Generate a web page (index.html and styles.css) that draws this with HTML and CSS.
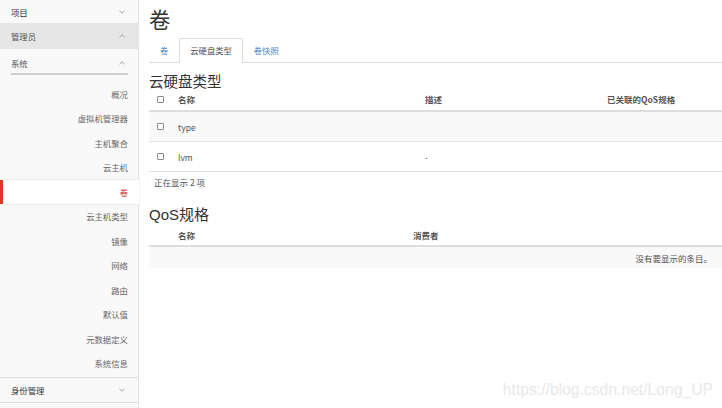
FILE: index.html
```html
<!DOCTYPE html>
<html lang="zh-CN">
<head>
<meta charset="utf-8">
<title>卷</title>
<link rel="stylesheet" href="styles.css">
</head>
<body>
<div class="page">
  <aside class="sidebar">
    <div class="nav-head">
      <span>项目</span>
      <svg class="chev" width="6" height="4" viewBox="0 0 6 4"><path d="M0.5 0.8L3 3.2L5.5 0.8" fill="none" stroke="#999" stroke-width="0.9"/></svg>
    </div>
    <div class="nav-head nav-head--open">
      <span>管理员</span>
      <svg class="chev" width="6" height="4" viewBox="0 0 6 4"><path d="M0.5 3.2L3 0.8L5.5 3.2" fill="none" stroke="#999" stroke-width="0.9"/></svg>
    </div>
    <div class="nav-sub">
      <span>系统</span>
      <svg class="chev" width="6" height="4" viewBox="0 0 6 4"><path d="M0.5 3.2L3 0.8L5.5 3.2" fill="none" stroke="#999" stroke-width="0.9"/></svg>
    </div>
    <ul class="nav-list">
      <li class="nav-item">概况</li>
      <li class="nav-item">虚拟机管理器</li>
      <li class="nav-item">主机聚合</li>
      <li class="nav-item">云主机</li>
      <li class="nav-item nav-item--active">卷</li>
      <li class="nav-item">云主机类型</li>
      <li class="nav-item">镜像</li>
      <li class="nav-item">网络</li>
      <li class="nav-item">路由</li>
      <li class="nav-item">默认值</li>
      <li class="nav-item">元数据定义</li>
      <li class="nav-item">系统信息</li>
    </ul>
    <div class="nav-head nav-head--bordered">
      <span>身份管理</span>
      <svg class="chev" width="6" height="4" viewBox="0 0 6 4"><path d="M0.5 0.8L3 3.2L5.5 0.8" fill="none" stroke="#999" stroke-width="0.9"/></svg>
    </div>
  </aside>

  <main class="main">
    <h1 class="title">卷</h1>
    <nav class="tabs">
      <a class="tab">卷</a>
      <a class="tab tab--active">云硬盘类型</a>
      <a class="tab">卷快照</a>
    </nav>

    <h2 class="section-title">云硬盘类型</h2>
    <div class="grid grid--types">
      <div class="row row--head">
        <div class="cell"><span class="checkbox"></span></div>
        <div class="cell">名称</div>
        <div class="cell">描述</div>
        <div class="cell">已关联的QoS规格</div>
      </div>
      <div class="row row--striped">
        <div class="cell"><span class="checkbox"></span></div>
        <div class="cell">type</div>
        <div class="cell"></div>
        <div class="cell"></div>
      </div>
      <div class="row">
        <div class="cell"><span class="checkbox"></span></div>
        <div class="cell">lvm</div>
        <div class="cell">-</div>
        <div class="cell"></div>
      </div>
    </div>
    <div class="count">正在显示 2 项</div>

    <h2 class="section-title section-title--qos">QoS规格</h2>
    <div class="grid grid--qos">
      <div class="row row--head">
        <div class="cell"></div>
        <div class="cell">名称</div>
        <div class="cell">消费者</div>
      </div>
      <div class="row row--empty">
        <div class="cell cell--empty">没有要显示的条目。</div>
      </div>
    </div>
  </main>
</div>
<div class="watermark">https://blog.csdn.net/Long_UP</div>
</body>
</html>
```

FILE: styles.css
```css
* { box-sizing: border-box; }

html, body {
  margin: 0;
  padding: 0;
}

body {
  width: 722px;
  height: 408px;
  overflow: hidden;
  background: #fff;
  color: #333;
  font-family: "Liberation Sans", "Noto Sans CJK SC", sans-serif;
  position: relative;
}

.page {
  display: flex;
  height: 408px;
}

/* ---------- sidebar ---------- */
.sidebar {
  width: 139px;
  flex: none;
  background: #f9f9f9;
  border-right: 1px solid #e2e2e2;
  font-family: "Noto Sans CJK SC", sans-serif;
  font-size: 8.4px;
  color: #666;
}

.nav-head {
  display: flex;
  justify-content: space-between;
  align-items: center;
  height: 23px;
  padding: 0 13px 0 11px;
  color: #333;
}

.nav-head--open {
  height: 26px;
  background: #e6e6e6;
  color: #555;
}

.nav-head--bordered {
  height: 26px;
  border-top: 1px solid #dedede;
  border-bottom: 1px solid #dedede;
  color: #333;
}

.chev { display: block; }

.nav-sub {
  display: flex;
  justify-content: space-between;
  align-items: center;
  height: 26px;
  margin: 0 10px 0 11px;
  padding: 4px 3px 0 0;
  border-bottom: 2px solid #cfcfcf;
  color: #555;
}

.nav-list {
  list-style: none;
  margin: 0;
  padding: 6.75px 0 1px;
}

.nav-item {
  height: 24.5px;
  line-height: 24.5px;
  text-align: right;
  padding-right: 10px;
}

.nav-item--active {
  position: relative;
  background: #fff;
  color: #c9302c;
  border-left: 3px solid #d9372b;
  margin-right: -1px;
  padding-right: 11px;
  box-shadow: 0 0 2px rgba(0, 0, 0, 0.12);
}

/* ---------- main ---------- */
.main {
  flex: 1;
  min-width: 0;
  padding-left: 10px;
  font-family: "Noto Sans CJK SC", sans-serif;
}

.title {
  margin: 0;
  padding-top: 6px;
  height: 38px;
  font-size: 21.5px;
  line-height: 26px;
  font-weight: normal;
  color: #333;
}

.tabs {
  display: flex;
  height: 25px;
  border-bottom: 1px solid #dddddd;
}

.tab {
  height: 25px;
  line-height: 23px;
  padding: 0 10px;
  font-size: 8.3px;
  color: #4a83bd;
  border: 1px solid transparent;
  border-bottom: none;
}

.tab--active {
  background: #fff;
  color: #555;
  border-color: #dddddd;
  border-radius: 2px 2px 0 0;
  padding: 0 10px;
}

.section-title {
  margin: 0;
  padding-top: 8px;
  height: 25px;
  font-size: 14.5px;
  line-height: 19px;
  font-weight: normal;
  color: #333;
}

.section-title--qos {
  font-family: "Liberation Sans", "Noto Sans CJK SC", sans-serif;
  padding-top: 13px;
  height: 32px;
  font-size: 15px;
}

.grid { font-size: 8.5px; color: #555; }

.row {
  display: grid;
  height: 30px;
  align-items: center;
  border-bottom: 1px solid #e3e3e3;
}

.grid--types .row {
  grid-template-columns: 29px 247px 182px 1fr;
}

.grid--qos .row {
  grid-template-columns: 29px 235px 1fr;
}

.row--head {
  height: 24px;
  border-bottom: 2px solid #dddddd;
  font-weight: bold;
  color: #555;
}

.row--striped { background: #f9f9f9; }

.cell { padding: 0; }

.checkbox {
  display: block;
  width: 7px;
  height: 7px;
  margin-left: 8px;
  border: 1px solid #8a8a8a;
  border-radius: 1px;
  background: #fff;
}

.count {
  height: 20px;
  line-height: 20px;
  padding-left: 5px;
  font-size: 8.5px;
  color: #555;
}

.grid--qos .row--head {
  height: 23px;
}

.row--empty {
  display: flex;
  justify-content: flex-end;
  height: 21px;
  background: #f9f9f9;
  border-bottom: none;
}

.cell--empty {
  padding-right: 10px;
}

/* ---------- watermark overlay ---------- */
.watermark {
  position: absolute;
  right: 9px;
  top: 380px;
  font-family: "Liberation Sans", sans-serif;
  font-size: 15.7px;
  line-height: 20px;
  color: #e8e8e8;
}
```
